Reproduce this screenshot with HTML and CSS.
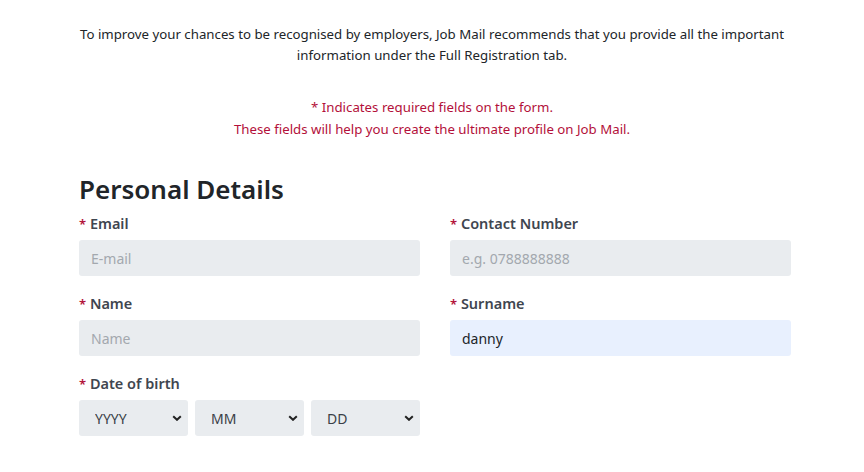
FILE: index.html
```html
<!DOCTYPE html>
<html lang="en">
<head>
<meta charset="utf-8">
<title>Personal Details</title>
<link rel="stylesheet" href="styles.css">
</head>
<body>
<div class="page">
  <p class="intro">To improve your chances to be recognised by employers, Job Mail recommends that you provide all the important<br>information under the Full Registration tab.</p>
  <p class="notice">* Indicates required fields on the form.<br>These fields will help you create the ultimate profile on Job Mail.</p>
  <form class="form">
    <h2 class="heading">Personal Details</h2>
    <div class="grid">
      <div class="field">
        <label class="label"><span class="req">*</span> Email</label>
        <input class="input" type="text" placeholder="E-mail">
      </div>
      <div class="field">
        <label class="label"><span class="req">*</span> Contact Number</label>
        <input class="input" type="text" placeholder="e.g. 0788888888">
      </div>
      <div class="field">
        <label class="label"><span class="req">*</span> Name</label>
        <input class="input" type="text" placeholder="Name">
      </div>
      <div class="field">
        <label class="label"><span class="req">*</span> Surname</label>
        <input class="input input-filled" type="text" value="danny">
      </div>
      <div class="field">
        <label class="label"><span class="req">*</span> Date of birth</label>
        <div class="dob">
          <span class="select-wrap"><select class="select"><option>YYYY</option></select><svg class="chev" viewBox="0 0 10 6" width="10" height="6"><path d="M1.2 1.2 L5 4.8 L8.8 1.2" fill="none" stroke="#222" stroke-width="2"/></svg></span>
          <span class="select-wrap"><select class="select"><option>MM</option></select><svg class="chev" viewBox="0 0 10 6" width="10" height="6"><path d="M1.2 1.2 L5 4.8 L8.8 1.2" fill="none" stroke="#222" stroke-width="2"/></svg></span>
          <span class="select-wrap"><select class="select"><option>DD</option></select><svg class="chev" viewBox="0 0 10 6" width="10" height="6"><path d="M1.2 1.2 L5 4.8 L8.8 1.2" fill="none" stroke="#222" stroke-width="2"/></svg></span>
        </div>
      </div>
    </div>
  </form>
</div>
</body>
</html>
```

FILE: styles.css
```css
html, body {
  margin: 0;
  padding: 0;
  background: #ffffff;
}
body {
  font-family: "Noto Sans", "Open Sans", sans-serif;
  color: #212529;
}
.page {
  padding-top: 24px;
}
.intro {
  margin: 0;
  text-align: center;
  font-size: 13.25px;
  line-height: 21px;
  color: #212529;
}
.notice {
  margin: 30px 0 0 0;
  text-align: center;
  font-size: 13.25px;
  line-height: 22px;
  color: #b3103a;
}
.form {
  width: 712px;
  margin: 0 0 0 79px;
}
.heading {
  margin: 33px 0 0 0;
  font-size: 26px;
  line-height: 32px;
  font-weight: 600;
  color: #212529;
}
.grid {
  display: grid;
  grid-template-columns: 1fr 1fr;
  column-gap: 30px;
  row-gap: 16px;
  margin-top: 7px;
}
.field {
  display: flex;
  flex-direction: column;
}
.label {
  font-size: 14.5px;
  line-height: 22px;
  height: 22px;
  font-weight: 600;
  color: #3f4650;
  margin-bottom: 6px;
}
.req {
  color: #b3103a;
  font-size: 13px;
  line-height: 1;
}
.input {
  box-sizing: border-box;
  height: 36px;
  border: none;
  border-radius: 3px;
  background: #e9ecef;
  padding: 0 12px;
  font-family: inherit;
  font-size: 14px;
  color: #212529;
  outline: none;
}
.input::placeholder {
  color: #a3a8ae;
}
.input-filled {
  background: #e8f0fe;
}
.dob {
  display: flex;
  gap: 7px;
  width: 341px;
}
.select-wrap {
  position: relative;
  flex: 1;
  display: block;
  height: 36px;
}
.select {
  -webkit-appearance: none;
  appearance: none;
  box-sizing: border-box;
  width: 100%;
  height: 36px;
  border: none;
  border-radius: 3px;
  background: #e9ecef;
  padding: 0 16px;
  font-family: inherit;
  font-size: 14px;
  color: #3a3f47;
  outline: none;
}
.chev {
  position: absolute;
  right: 6px;
  top: 15px;
  pointer-events: none;
}
```
